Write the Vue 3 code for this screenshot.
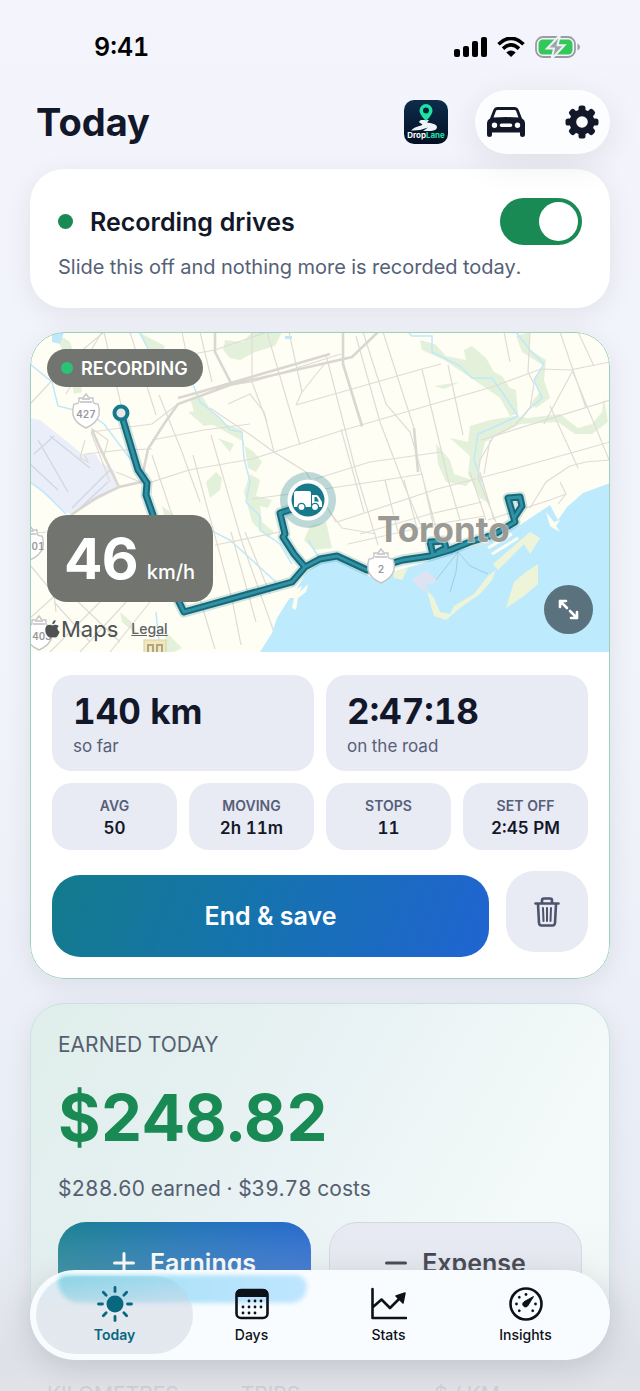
<template>
<div class="screen">
    <div class="status">
        <span class="status__time">9:41</span>
        <div class="status__icons">
            <svg width="33" height="20" viewBox="0 0 33 20">
                <rect x="0" y="12" width="6" height="8" rx="2" />
                <rect x="9" y="9" width="6" height="11" rx="2" />
                <rect x="18" y="4" width="6" height="16" rx="2" />
                <rect x="27" y="0" width="6" height="20" rx="2" />
            </svg>
            <svg width="28" height="20" viewBox="0 0 28 20">
                <path d="M1.500 7.200Q14-4.600 26.500 7.200M6 11.600Q14 4 22 11.600" fill="none" stroke="#000" stroke-width="3.600" />
                <path d="M14 20L9.300 15.400Q14 11.400 18.700 15.400Z" />
            </svg>
            <svg width="46" height="22" viewBox="0 0 46 22">
                <rect x="1" y="1" width="39" height="20" rx="7" fill="none" stroke="#9b9ca3" stroke-width="1.800" />
                <path d="M42.500 7.500q2.500 1 2.500 3.500t-2.500 3.500z" fill="#9b9ca3" />
                <rect x="3.500" y="3.500" width="34" height="15" rx="4.500" fill="#34c759" />
                <path d="M25 -1L12 12.500H19L16.500 23L29.500 9.200H22.500Z" fill="#9fa6aa" stroke="#f1f2f8" stroke-width="2" />
            </svg>
        </div>
    </div>

    <header class="header">
        <h1>Today</h1>
        <svg class="logo" width="44" height="44" viewBox="0 0 44 44">
            <defs>
                <linearGradient id="logoBg" x1="0" y1="0" x2="0" y2="1">
                    <stop offset="0" stop-color="#0d2d4c" />
                    <stop offset="1" stop-color="#020f22" />
                </linearGradient>
            </defs>
            <rect width="44" height="44" rx="10" fill="url(#logoBg)" />
            <path d="M17 20H25L23 22.500Q33 23.500 33 27Q33 30.500 27 31H19L24 27.500Q16 31 7 30.500Q10 27 17 25.500Q20 24.500 16 23Q14 21.500 17 20Z" fill="#eef3f8" />
            <path d="M22 4a6.500 6.500 0 0 0-6.500 6.500C15.500 15 22 21 22 21s6.500-6 6.500-10.500A6.500 6.500 0 0 0 22 4z" fill="#1fe3a2" />
            <circle cx="22" cy="10.500" r="3" fill="#08233b" />
            <text x="22" y="38" class="logo__text" fill="#fff">Drop<tspan fill="#22e0a8">Lane</tspan></text>
        </svg>
        <div class="header__actions">
            <button aria-label="Vehicle">
                <svg width="38" height="30" viewBox="0 0 38 30">
                    <path fill-rule="evenodd" fill="#121829" d="M10.500 0h17q3 0 4.200 3l3.300 8.500q3 1.500 3 5V28q0 2-2.500 2t-2.500-2v-2.500H5V28q0 2-2.500 2T0 28V16.500q0-3.500 3-5L6.300 3Q7.500 0 10.500 0zM10.500 3q-1.200 0-1.600 1L6.500 10.600Q19 9.600 31.500 10.600L29.100 4q-.4-1-1.600-1zM7.500 15.500a2.700 2.700 0 1 0 0 5.400 2.700 2.700 0 0 0 0-5.400zM30.500 15.500a2.700 2.700 0 1 0 0 5.400 2.700 2.700 0 0 0 0-5.400zM14.500 16.500a1.800 1.800 0 0 0 0 3.600h9a1.800 1.800 0 0 0 0-3.600z" />
                </svg>
            </button>
            <button aria-label="Settings">
                <svg width="34" height="34" viewBox="0 0 34 34" fill="#121829">
                    <rect v-for="a in [0, 45, 90, 135]" :key="a" x="13.500" y="0.500" width="7" height="33" rx="2.600" :transform="`rotate(${a} 17 17)`" />
                    <circle cx="17" cy="17" r="12.500" />
                    <circle cx="17" cy="17" r="5.800" fill="#fbfdff" />
                </svg>
            </button>
        </div>
    </header>

    <section class="card record">
        <div class="record__row">
            <span class="dot"></span>
            <label for="rec">Recording drives</label>
            <input id="rec" type="checkbox" role="switch" v-model="recording">
        </div>
        <p>Slide this off and nothing more is recorded today.</p>
    </section>

    <section class="card drive">
        <div class="map">
            <svg class="map__canvas" viewBox="0 0 580 320" preserveAspectRatio="xMidYMid slice">
                <rect width="580" height="320" fill="#fefef4" />
                <!-- airport -->
                <path d="M0 86L10 88L40 112L52 122L66 122L70 130L84 138L88 156L60 172L42 183L32 178L0 150Z" fill="#e9eef9" />
                <path d="M0 132L28 158M8 108L38 160M20 104L60 136M4 122L24 104M42 176L80 138M48 178L78 150" stroke="#d2d7e3" stroke-width="1.400" fill="none" />
                <!-- parks -->
                <g fill="#e3f1da">
                    <path d="M25 0L40 10L48 34L52 60L44 62L38 32zM108 0L135 14L130 24L118 18zM195 8L213 10L222 0H252L245 14L225 20L210 28L200 26L193 18zM160 66L172 64L182 80L196 92L212 98L212 112L224 120L232 130L226 140L218 136L214 110L196 100L178 90L164 80zM158 80L176 78L190 92L174 94z" />
                    <path d="M176 150L186 140L192 146L190 158L180 166zM220 142L230 148L226 164L242 168L238 176L230 174L232 190L244 200L238 206L222 190L214 160zM188 106L204 112L200 120zM132 174L146 184L158 200L150 196L134 184zM90 280L104 292L106 302L92 290zM136 300L152 316L144 320H134zM280 194L296 190L302 216L284 218L274 208z" />
                    <path d="M390 8L405 12L416 24L436 28L434 18L442 14L456 26L464 40L472 44L480 56L486 58L488 82L480 84L470 66L450 52L432 40L414 28L392 18zM404 54L430 50L414 57zM486 4L500 0L500 18L516 28L514 48L520 66L506 76L500 72L510 60L504 46L514 34L492 20z" />
                    <path d="M440 94L460 88L484 84L498 86L530 82L548 96L562 92L572 80L574 66L578 90L562 102L545 102L528 90L490 92L466 104L455 110L448 140L456 160L460 172L450 166L438 142L440 124L420 106L438 110zM406 112L420 128L424 142L442 148L436 154L416 150L408 132zM506 198L520 186L516 202L500 214z" />
                </g>
                <!-- streams -->
                <g fill="none" stroke="#bfe8fb" stroke-width="1.500">
                    <path d="M0 32L22 50L28 74L60 82L74 92L98 124L118 144M110 0L126 34M162 50L170 70L190 86L200 98L212 100L214 126L220 150L216 170L230 184L230 198L250 212L262 232M176 196L200 208L246 250M126 280L130 320M0 150L14 160L36 182" />
                    <path d="M378 0L382 4H402V20L430 34L442 46H462L476 66L488 84L462 96L448 102L444 128L452 150M486 0L500 18L514 32L504 48L512 66L498 78L490 88M278 208L288 224" />
                </g>
                <path d="M22 0h12l-4 12l-8-2zM255 4h7v3h-7z" fill="#bfe8fb" />
                <!-- streets -->
                <g fill="none" stroke="#dfdcd6" stroke-width="1.200">
                    <path d="M36 62L60 20L72 0M0 72L30 40M50 20L74 0M0 286L60 232L106 190M20 320L70 270M50 320L98 268M80 320L120 270M0 233L24 262L26 280M24 270L60 310M40 262L90 310" />
                    <path d="M0 202L16 200M55 122L92 118L122 117M61 100L122 92L148 72M122 108L174 98L220 92M86 140L96 144L115 152L159 138L222 127L244 120L307 100L462 55L511 37L540 38L580 30" />
                    <path d="M140 26L185 18L237 0M200 53L222 50L311 22M266 73L392 37L411 32M285 147L340 130L411 120M451 108L580 68M222 167L260 162L355 148L392 142M307 190L407 157L480 138L580 110M185 213L250 200M330 202L400 182L452 170M318 212L407 192L455 184M458 188L520 168L536 162" />
                    <path d="M74 0L92 77M100 0L126 83M129 63L152 120L170 170M61 100L80 150M122 123L170 267L185 317M163 123L202 267L211 313M181 103L212 210L244 300M201 200L226 290M215 200L240 262M152 0L158 30M170 0L182 50M222 0L222 50L237 90M237 0L270 113M259 0L272 60L266 73" />
                    <path d="M296 23L326 140L348 213M272 60L296 30M311 97L334 180M313 33L332 95M333 0L356 72L380 100L386 120L407 200M353 0L384 96M392 37L418 147L430 188M418 33L433 103M326 4L350 90L372 148L396 206M355 148L368 200M374 148L388 200M392 142L404 196M300 180L312 196L346 202" />
                    <path d="M474 0L480 30M500 0L498 40L504 52L500 76L484 94L464 104L450 128L448 146L466 190M530 0L556 76M548 0L564 34M542 38L580 130M514 92L542 40M520 74L548 136M440 140L456 188M450 140L464 188M460 108L454 142M500 176L516 150L540 134L556 130L580 128M530 150L536 162L528 172" />
                    <path d="M55 108L50 126L58 130L54 122M61 96L78 108L74 124M198 72L220 62L234 80L244 120L276 140L306 190M180 76L222 104L244 120" />
                </g>
                <g fill="none" stroke="#dad7d1" stroke-width="2.600">
                    <path d="M41 183L66 166L89 155L111 150M111 150L118 117L134 92L148 72L200 53L322 25L348 0M148 66L170 60L300 22M185 0L185 20L202 53M313 0V32L332 94M384 96L388 140M89 155L70 116L62 98" />
                </g>
                <!-- lake and islands -->
                <path d="M230 320L242 301L247 286L257 270L267 256L277 240L290 230L307 228L337 243L347 248L363 240L393 231L423 220L457 211L463 206L490 193L520 173L528 188L537 175L553 161L580 151V320Z" fill="#bdebfd" />
                <path d="M258 266L264 258L272 254L270 260L278 252L276 260L268 266L266 278L262 276L264 266zM516 180L524 190L530 188L526 194L530 200L520 194z" fill="#fdfdf0" />
                <path d="M463 232L486 212L500 200L510 206L500 222L494 212L468 238zM363 240L378 236L372 248L364 246zM396 256L404 266L410 280L420 282L424 274L444 262L458 244L466 238L462 248L450 262L430 276L416 288L404 284L400 270zM476 276L484 250L496 240L508 232L508 252L494 264z" fill="#eef4d8" />
                <path d="M382 248L396 238L408 250L396 252L400 262L390 256z" fill="#dde3f1" />
                <path d="M458 216L482 202M462 222L488 206" stroke="#fdfdf0" stroke-width="3" />
                <path d="M428 220L406 248M428 220L426 240L420 260M428 220L440 234L458 242" stroke="#aac8e2" fill="none" />
                <!-- recorded route -->
                <g fill="none" stroke-linejoin="round" stroke-linecap="round">
                    <path v-for="layer in layers" :key="layer.width" :d="route" :stroke="layer.color" :stroke-width="layer.width" />
                </g>
                <circle cx="91" cy="81" r="6.500" fill="#e9e9ea" stroke="#177a8b" stroke-width="4" />
                <!-- highway shields -->
                <g v-for="s in shields" :key="s.label" :transform="`translate(${s.x} ${s.y})`">
                    <path d="M-12 -9Q-7 -9-7 -12V-15H-3L0 -19L3 -15H7V-12Q7 -9 12 -9Q14 -4 13 2Q11 10 0 15Q-11 10-13 2Q-14 -4-12 -9Z" fill="#fff" stroke="#c6c6c8" stroke-width="1.400" />
                    <path d="M-6 -11H6M-4 -14H4" stroke="#cfcfd1" stroke-width="2" />
                    <text :x="s.shift" y="5" class="shield">{{ s.label }}</text>
                </g>
                <rect x="114" y="308" width="22" height="16" fill="#f3e9b8" stroke="#d9cfa4" />
                <path d="M118 320V313H123V320M127 320V313H132V320" fill="none" stroke="#aaa58b" stroke-width="2" />
                <text x="347" y="210" class="city">Toronto</text>
                <!-- current position -->
                <circle cx="278" cy="168" r="28" fill="#177a8b" opacity="0.28" />
                <circle cx="278" cy="168" r="20.500" fill="#fff" />
                <circle cx="278" cy="168" r="16.500" fill="#177a8b" />
                <path d="M266 159h13q2 0 2 2v14h-17v-14q0-2 2-2zM282 163h4q2 0 3 2l3 5v5h-10z" fill="#fff" />
                <path d="M284.500 165h2l2.500 4.500h-4.500z" fill="#177a8b" />
                <g fill="#fff" stroke="#177a8b" stroke-width="1.400">
                    <circle cx="271.500" cy="175" r="3.600" />
                    <circle cx="285" cy="175" r="3.600" />
                </g>
            </svg>
            <div class="badge"><span class="badge__dot"></span>RECORDING</div>
            <div class="speed"><strong>46</strong><span>km/h</span></div>
            <div class="credit">
                <svg width="15" height="18" viewBox="0 0 15 18" fill="#505153">
                    <path d="M10.500 0Q10.700 3.500 7.300 4.300Q7.200 1 10.500 0zM7.600 5.400Q10.500 3.600 13.800 6Q10.600 8.600 14.600 12Q12.500 17.500 10 17.600Q7.600 16.700 5.400 17.600Q2.500 17.500.6 12.500Q-.8 6 3.500 4.900Q5.500 4.600 7.600 5.400z" />
                </svg>
                <span>Maps</span>
                <a href="#legal">Legal</a>
            </div>
            <button class="expand" aria-label="Expand map">
                <svg width="21" height="21" viewBox="0 0 21 21" fill="none" stroke="#fff" stroke-width="2.600" stroke-linecap="round" stroke-linejoin="round">
                    <path d="M2 8V2H8M2 2L9 9M19 13V19H13M19 19L12 12" />
                </svg>
            </button>
        </div>
        <div class="drive__body">
            <div class="totals">
                <div v-for="t in totals" :key="t.label" class="tile">
                    <strong>{{ t.value }}</strong>
                    <span>{{ t.label }}</span>
                </div>
            </div>
            <div class="stats">
                <div v-for="s in stats" :key="s.label" class="stat">
                    <span>{{ s.label }}</span>
                    <strong>{{ s.value }}</strong>
                </div>
            </div>
            <div class="actions">
                <button class="save">End &amp; save</button>
                <button class="trash" aria-label="Delete drive">
                    <svg width="26" height="30" viewBox="0 0 26 30" fill="none" stroke="#4b546b" stroke-width="2.600" stroke-linecap="round" stroke-linejoin="round">
                        <path d="M1.500 6.500H24.500M8 6V3.500Q8 1.500 10 1.500H16Q18 1.500 18 3.500V6M4 7L5 26Q5.200 28.500 7.500 28.500H18.500Q20.800 28.500 21 26L22 7" />
                        <path d="M9 11L9.500 24M13 11V24M17 11L16.500 24" stroke-width="2" />
                    </svg>
                </button>
            </div>
        </div>
    </section>

    <section class="card earned">
        <h2>EARNED TODAY</h2>
        <p class="earned__amount">$248.82</p>
        <p class="earned__detail">$288.60 earned · $39.78 costs</p>
        <div class="earned__actions">
            <button class="earnings">
                <svg width="22" height="22" viewBox="0 0 22 22"><path d="M1.500 11H20.500M11 1.500V20.500" /></svg>
                Earnings
            </button>
            <button class="expense">
                <svg width="22" height="22" viewBox="0 0 22 22"><path d="M1.500 11H20.500" /></svg>
                Expense
            </button>
        </div>
    </section>

    <div class="summary">
        <span>KILOMETRES</span>
        <span>TRIPS</span>
        <span>$ / KM</span>
    </div>

    <div class="fade"></div>
    <nav class="tabs">
        <div class="tabs__glow"></div>
        <button class="tab tab--active">
            <svg width="36" height="36" viewBox="0 0 36 36">
                <circle cx="18" cy="18" r="8.500" fill="#07687f" />
                <path v-for="i in 8" :key="i" d="M18 1.500V5.500" :transform="`rotate(${i * 45} 18 18)`" stroke="#07687f" stroke-width="2.800" stroke-linecap="round" />
            </svg>
            <span>Today</span>
        </button>
        <button class="tab">
            <svg width="36" height="36" viewBox="0 0 36 36">
                <rect x="2.500" y="4" width="31" height="28" rx="4.500" fill="none" stroke="#0d1118" stroke-width="2.600" />
                <path d="M2 11V8Q2 3 7 3H29Q34 3 34 8V11Z" fill="#0d1118" />
                <g fill="#0d1118">
                    <circle v-for="d in days" :key="d.x + '-' + d.y" :cx="d.x" :cy="d.y" r="1.400" />
                </g>
            </svg>
            <span>Days</span>
        </button>
        <button class="tab">
            <svg width="36" height="36" viewBox="0 0 36 36" fill="none" stroke="#0d1118" stroke-width="2.600" stroke-linecap="round" stroke-linejoin="round">
                <path d="M1.500 3V32H35M2 21L10.500 13.500L19 22L29 12" />
                <path d="M34 7L32 17L25 10Z" fill="#0d1118" stroke-width="1.500" />
            </svg>
            <span>Stats</span>
        </button>
        <button class="tab">
            <svg width="36" height="36" viewBox="0 0 36 36">
                <circle cx="18" cy="18" r="15.500" fill="none" stroke="#0d1118" stroke-width="2.600" />
                <circle v-for="a in [-135, -90, -45, 0, 90, 135]" :key="a" cx="18" cy="8.500" r="1.400" fill="#0d1118" :transform="`rotate(${a} 18 18)`" />
                <path d="M25.500 10.500L20 19.500A2.800 2.800 0 1 1 16 15.800Z" fill="#0d1118" stroke="#0d1118" stroke-linejoin="round" />
            </svg>
            <span>Insights</span>
        </button>
    </nav>
</div>
</template>

<script setup>
import { ref } from 'vue'
const recording = ref(true)
const route = 'M91 81L108 138L117 151L116 163L123 183L148 268L154 280L262 250L275 235L290 227L307 224L337 238L352 234L373 228L400 224L420 218L440 210L463 203L485 190L478 166L490 165L492 174L484 186M275 235L264 222L253 205L255 202L250 181L272 174M403 223L400 210L414 209L416 216L408 220'
const layers = [
    { width: 11, color: 'rgba(23, 122, 139, 0.2)' },
    { width: 7, color: '#14697b' },
    { width: 3, color: '#3291a2' }
]
const shields = [
    { label: '427', x: 56, y: 81, shift: 0 },
    { label: '01', x: 0, y: 213, shift: 8 },
    { label: '403', x: 9, y: 303, shift: 3 },
    { label: '2', x: 351, y: 236, shift: 0 }
]
const totals = [
    { value: '140 km', label: 'so far' },
    { value: '2:47:18', label: 'on the road' }
]
const stats = [
    { label: 'AVG', value: '50' },
    { label: 'MOVING', value: '2h 11m' },
    { label: 'STOPS', value: '11' },
    { label: 'SET OFF', value: '2:45 PM' }
]
const days = [
    { x: 15, y: 15 }, { x: 21, y: 15 }, { x: 27, y: 15 },
    { x: 9, y: 21 }, { x: 15, y: 21 }, { x: 21, y: 21 }, { x: 27, y: 21 },
    { x: 9, y: 27 }, { x: 15, y: 27 }, { x: 21, y: 27 }
]
</script>

<style>
body{
    background-color: #f2f3fb;
}
</style>

<style scoped>
.screen{
    position: relative;
    height: 100vh;
    overflow: hidden;
    padding: 0 30px;
    box-sizing: border-box;
    font-family: Inter, "Noto Sans", sans-serif;
    font-variant-numeric: tabular-nums;
    color: #121829;
    background: linear-gradient(#f3f4fc, #f1f3fa 50%, #e9edf6 85%, #e6e9f0);
}

h1, h2, p{
    margin: 0;
}

button{
    font-family: inherit;
    color: inherit;
    border: none;
    background: none;
    padding: 0;
    cursor: pointer;
}

svg{
    display: block;
    flex: none;
}

.status{
    display: flex;
    justify-content: space-between;
    align-items: center;
    height: 90px;
    padding: 4px 29px 0 64px;
    box-sizing: border-box;
    color: #000;
}

.status__time{
    font-size: 25px;
    font-weight: 600;
}

.status__icons{
    display: flex;
    align-items: center;
    gap: 10px;
}

.header{
    display: flex;
    align-items: center;
    height: 64px;
    margin-bottom: 15px;
}

.header h1{
    flex: 1;
    padding-left: 6px;
    font-size: 38px;
    font-weight: 700;
}

.logo{
    margin-right: 27px;
}

.logo__text{
    font-size: 8px;
    font-weight: 700;
    text-anchor: middle;
}

.header__actions{
    display: flex;
    align-items: center;
    justify-content: space-between;
    width: 135px;
    height: 64px;
    padding: 0 11px 0 12px;
    box-sizing: border-box;
    border-radius: 32px;
    background-color: #fbfdff;
    box-shadow: 0 8px 36px rgba(0, 0, 0, 0.09);
}

.card{
    border-radius: 34px;
    box-sizing: border-box;
    box-shadow: 0 6px 28px rgba(20, 30, 30, 0.08);
}

.record{
    padding: 29px 28px 27px;
    margin-bottom: 24px;
    background-color: #fefffe;
}

.record__row{
    display: flex;
    align-items: center;
    margin-bottom: 8px;
}

.dot{
    width: 15px;
    height: 15px;
    margin-right: 17px;
    border-radius: 50%;
    background-color: #1a8a54;
}

.record label{
    flex: 1;
    font-size: 25px;
    font-weight: 600;
}

.record input{
    appearance: none;
    display: flex;
    align-items: center;
    width: 82px;
    height: 47px;
    margin: 0;
    padding: 4px;
    box-sizing: border-box;
    border-radius: 24px;
    background-color: #a9adb8;
}

.record input::before{
    content: "";
    width: 39px;
    height: 39px;
    border-radius: 50%;
    background-color: #fff;
}

.record input:checked{
    justify-content: flex-end;
    background-color: #1a8a54;
}

.record p{
    font-size: 20px;
    line-height: 28px;
    color: #565f78;
}

.drive{
    position: relative;
    margin-bottom: 24px;
    overflow: hidden;
    background-color: #fefffe;
}

.drive::after{
    content: "";
    position: absolute;
    inset: 0;
    border: 1px solid #9dcfbd;
    border-radius: 34px;
    pointer-events: none;
}

.map{
    position: relative;
    height: 320px;
}

.map__canvas{
    width: 100%;
    height: 100%;
}

.shield{
    font-size: 10px;
    font-weight: 600;
    text-anchor: middle;
    fill: #98989b;
}

.city{
    font-size: 35px;
    font-weight: 700;
    fill: #9c9a95;
    stroke: #fff;
    stroke-opacity: 0.500;
    stroke-width: 2px;
    paint-order: stroke;
}

.badge{
    position: absolute;
    left: 17px;
    top: 17px;
    display: flex;
    align-items: center;
    gap: 8px;
    height: 38px;
    padding: 0 15px 0 14px;
    border-radius: 19px;
    background-color: #71746f;
    color: #fff;
    font-size: 18px;
    font-weight: 600;
}

.badge__dot{
    width: 12px;
    height: 12px;
    border-radius: 50%;
    background-color: #2cc276;
}

.speed{
    position: absolute;
    left: 17px;
    top: 183px;
    display: flex;
    align-items: baseline;
    gap: 8px;
    height: 87px;
    padding: 0 18px;
    border-radius: 20px;
    background-color: #71746f;
    color: #fff;
    line-height: 87px;
}

.speed strong{
    font-size: 57px;
    font-weight: 700;
}

.speed span{
    font-size: 20px;
    font-weight: 500;
}

.credit{
    position: absolute;
    left: 15px;
    bottom: 9px;
    display: flex;
    align-items: center;
    gap: 1px;
    font-size: 22px;
    line-height: 28px;
    color: #505153;
}

.credit a{
    margin-left: 12px;
    font-size: 14px;
    font-weight: 500;
    color: #606164;
}

.expand{
    position: absolute;
    right: 17px;
    bottom: 18px;
    display: grid;
    place-items: center;
    width: 49px;
    height: 49px;
    border-radius: 50%;
    background-color: #5a727e;
}

.drive__body{
    padding: 23px 22px 22px;
}

.totals, .stats{
    display: grid;
    grid-template-columns: repeat(2, 1fr);
    gap: 12px;
    margin-bottom: 12px;
}

.stats{
    grid-template-columns: repeat(4, 1fr);
    margin-bottom: 21px;
}

.tile, .stat{
    display: flex;
    flex-direction: column;
    border-radius: 20px;
    background-color: #e8eaf4;
}

.tile{
    height: 96px;
    padding: 14px 21px;
    box-sizing: border-box;
}

.tile strong{
    font-size: 35px;
    line-height: 44px;
    font-weight: 700;
}

.tile span{
    font-size: 17px;
    line-height: 26px;
    color: #565f78;
}

.stat{
    align-items: center;
    justify-content: center;
    height: 67px;
    font-size: 17px;
    line-height: 23px;
}

.stat span{
    font-size: 14px;
    font-weight: 600;
    color: #565f78;
}

.stat strong{
    font-weight: 600;
}

.actions{
    display: flex;
    align-items: flex-end;
    gap: 17px;
    height: 86px;
}

.save{
    flex: 1;
    height: 82px;
    border-radius: 28px;
    background: linear-gradient(110deg, #137b8c, #1573ad 45%, #2064d2);
    color: #fff;
    font-size: 25px;
    font-weight: 600;
}

.trash{
    display: grid;
    place-items: center;
    align-self: flex-start;
    width: 82px;
    height: 81px;
    border-radius: 28px;
    background-color: #e8eaf4;
}

.earned{
    padding: 27px 27px 28px;
    border: 1px solid #c9e3e2;
    background: linear-gradient(120deg, #dfeeeb, #e9f2f4 45%, #f3faf9 80%);
}

.earned h2{
    margin-bottom: 23px;
    font-size: 21px;
    line-height: 28px;
    font-weight: 400;
    color: #565f70;
}

.earned__amount{
    margin-bottom: 21px;
    font-size: 65px;
    line-height: 72px;
    font-weight: 700;
    color: #1a8a54;
}

.earned__detail{
    margin-bottom: 19px;
    font-size: 21px;
    line-height: 28px;
    color: #565f70;
}

.earned__actions{
    display: grid;
    grid-template-columns: repeat(2, 1fr);
    gap: 18px;
}

.earned__actions button{
    display: flex;
    align-items: center;
    justify-content: center;
    gap: 15px;
    height: 82px;
    border-radius: 28px;
    font-size: 25px;
    font-weight: 600;
}

.earned__actions path{
    fill: none;
    stroke: currentColor;
    stroke-width: 3px;
    stroke-linecap: round;
}

.earned__actions .earnings{
    background: linear-gradient(110deg, #1a8191, #2374b9 50%, #2867d2);
    color: #fff;
}

.earned__actions .expense{
    border: 1px solid #d5d7df;
    background-color: #e8eaf3;
    color: #2c303b;
}

.summary{
    display: grid;
    grid-template-columns: repeat(3, 1fr);
    gap: 18px;
    margin-top: 48px;
    padding: 0 0 0 17px;
    font-size: 21px;
    line-height: 28px;
    color: #a8abb2;
}

.fade{
    position: absolute;
    left: 0;
    right: 0;
    bottom: 0;
    height: 170px;
    background: linear-gradient(rgba(222, 225, 230, 0), rgba(222, 225, 230, 0.200) 30%, rgba(218, 221, 226, 0.700) 80%, rgba(222, 224, 229, 0.700));
    pointer-events: none;
}

.tabs{
    position: absolute;
    left: 30px;
    right: 30px;
    bottom: 31px;
    display: grid;
    grid-template-columns: repeat(4, 1fr);
    height: 90px;
    padding: 0 16px;
    box-sizing: border-box;
    border-radius: 45px;
    background-color: #f8fcff;
    box-shadow: 0 8px 32px rgba(0, 0, 0, 0.120);
}

.tabs__glow{
    position: absolute;
    left: 28px;
    top: 5px;
    width: 43%;
    height: 28px;
    border-radius: 8px 14px 20px 26px;
    background: linear-gradient(90deg, #8fdcec, #b0e3fa 50%, #bfe5ff);
    filter: blur(2px);
}

.tab{
    position: relative;
    display: flex;
    flex-direction: column;
    align-items: center;
    justify-content: center;
    gap: 3px;
    font-size: 14px;
    line-height: 20px;
    font-weight: 500;
    color: #0d1118;
}

.tab--active{
    color: #07687f;
    font-weight: 600;
}

.tab--active::before{
    content: "";
    position: absolute;
    inset: 6px -10px;
    border-radius: 39px;
    background: linear-gradient(rgba(120, 190, 210, 0.250), rgba(214, 218, 228, 0.600) 40%);
}

.tab svg, .tab span{
    position: relative;
}
</style>
